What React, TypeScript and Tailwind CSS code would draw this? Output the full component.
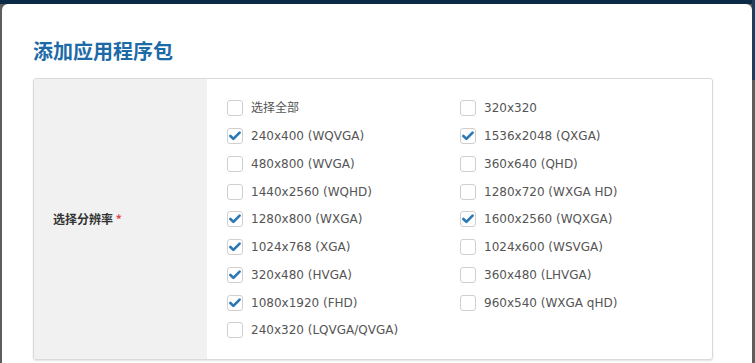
import { Fragment } from 'react'

type Option = { label: string; checked: boolean }

const leftCol: Option[] = [
    { label: '选择全部', checked: false },
    { label: '240x400 (WQVGA)', checked: true },
    { label: '480x800 (WVGA)', checked: false },
    { label: '1440x2560 (WQHD)', checked: false },
    { label: '1280x800 (WXGA)', checked: true },
    { label: '1024x768 (XGA)', checked: true },
    { label: '320x480 (HVGA)', checked: true },
    { label: '1080x1920 (FHD)', checked: true },
    { label: '240x320 (LQVGA/QVGA)', checked: false },
]

const rightCol: Option[] = [
    { label: '320x320', checked: false },
    { label: '1536x2048 (QXGA)', checked: true },
    { label: '360x640 (QHD)', checked: false },
    { label: '1280x720 (WXGA HD)', checked: false },
    { label: '1600x2560 (WQXGA)', checked: true },
    { label: '1024x600 (WSVGA)', checked: false },
    { label: '360x480 (LHVGA)', checked: false },
    { label: '960x540 (WXGA qHD)', checked: false },
]

function Check({ opt }: { opt?: Option }) {
    if (!opt) return <div />
    return (
        <label className="flex h-[27.75px] items-center">
            <span className="flex h-[16px] w-[16px] items-center justify-center rounded-[3px] border border-[#cfcfcf] bg-white">
                {opt.checked && (
                    <svg width="12" height="10" viewBox="0 0 12 10" fill="none">
                        <path d="M1.4 5 L4.4 7.9 L10.6 1.6" stroke="#2a78b6" strokeWidth="2.6" strokeLinecap="round" strokeLinejoin="round" />
                    </svg>
                )}
            </span>
            <span className="ml-[8px] text-[12px] text-[#555]">{opt.label}</span>
        </label>
    )
}

export default function App() {
    return (
        <div className="relative h-[363px] w-[755px] overflow-hidden bg-[#5e5e5e] font-['DejaVu_Sans','Noto_Sans_CJK_SC',sans-serif]">
            <div className="absolute inset-x-0 top-0 h-[4px] bg-[#0c2a46]"></div>
            <div className="absolute right-0 top-0 h-[80px] w-[3px] bg-[#1d3f5e]"></div>

            <div className="relative ml-[2px] mt-[4px] h-[380px] w-[750px] rounded-[6px] bg-white pl-[31px] pr-[39px]">
                <h2 className="pt-[35px] text-[20px] font-bold leading-[24px] text-[#1c6aa7] font-['Noto_Sans_CJK_SC',sans-serif]">
                    添加应用程序包
                </h2>

                <div className="mt-[15px] flex h-[282px] overflow-hidden rounded-[3px] border border-[#dadada] shadow-[0_1px_2px_rgba(0,0,0,0.12)]">
                    <div className="flex w-[173px] items-center bg-[#f1f1f1] pl-[19px]">
                        <span className="text-[12px] font-bold text-[#333] font-['Noto_Sans_CJK_SC',sans-serif]">
                            选择分辨率 <span className="text-[#e0474b]">*</span>
                        </span>
                    </div>
                    <div className="flex-1 pl-[20px] pt-[15.5px]">
                        <div className="grid grid-cols-[233px_1fr]">
                            {leftCol.map((opt, i) => (
                                <Fragment key={opt.label}>
                                    <Check opt={opt} />
                                    <Check opt={rightCol[i]} />
                                </Fragment>
                            ))}
                        </div>
                    </div>
                </div>
            </div>
        </div>
    )
}
